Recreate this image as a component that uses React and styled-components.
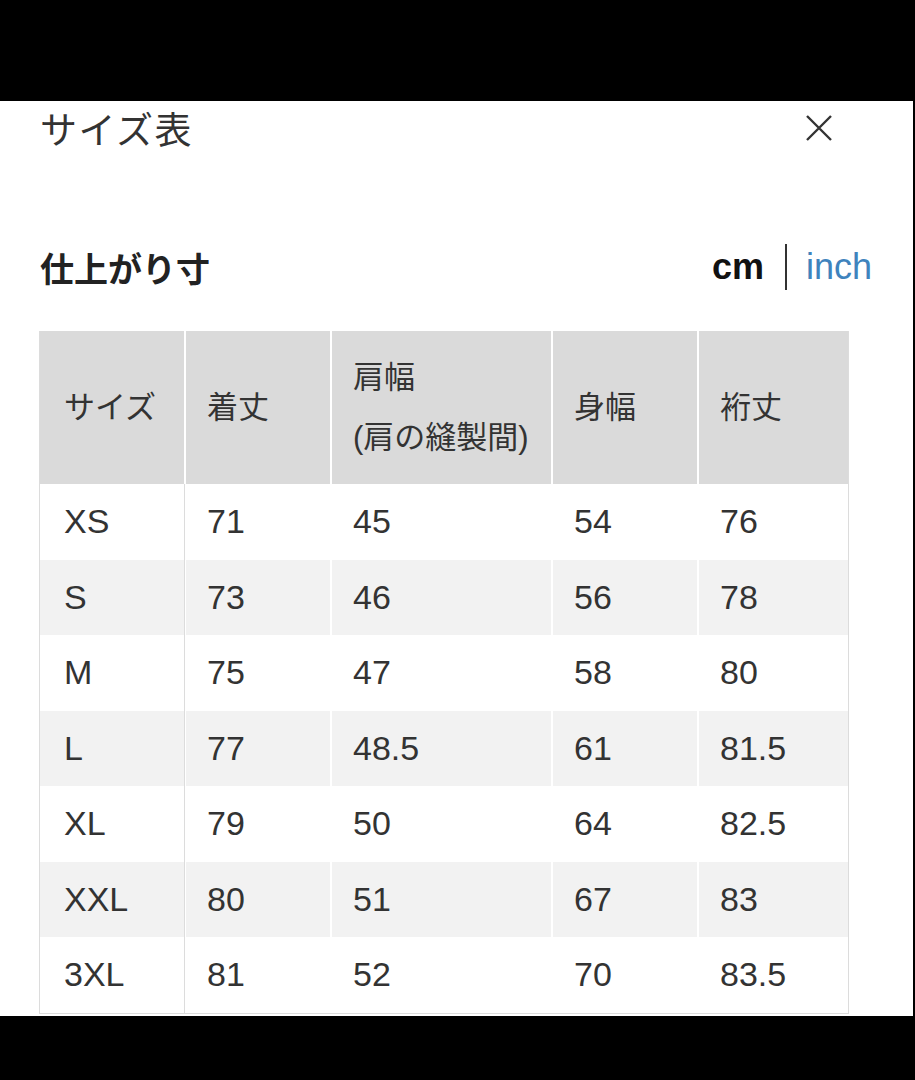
import React from 'react';
import styled, { createGlobalStyle } from 'styled-components';

// ページ全体（上下の黒帯）
const GlobalStyle = createGlobalStyle`
  html, body {
    margin: 0;
    padding: 0;
    background: #000;
  }
  body {
    font-family: "Liberation Sans", "Noto Sans CJK JP", sans-serif;
    color: #333;
  }
`;

const Screen = styled.div`
  width: 915px;
  height: 1080px;
  padding-top: 101px;
  box-sizing: border-box;
  background: #000;
`;

const Panel = styled.div`
  width: 913px;
  height: 915px;
  background: #fff;
  box-sizing: border-box;
  overflow: hidden;
`;

const TitleBar = styled.div`
  height: 54px;
  display: flex;
  align-items: center;
  justify-content: space-between;
  padding: 0 79px 0 40px;
`;

const Title = styled.h1`
  margin: 0;
  font-size: 37px;
  font-weight: 400;
  color: #333;
  letter-spacing: 1.5px;
`;

const CloseButton = styled.button`
  width: 30px;
  height: 30px;
  padding: 0;
  border: none;
  background: none;
  display: flex;
  align-items: center;
  justify-content: center;
`;

const SubBar = styled.div`
  margin-top: 83px;
  height: 58px;
  display: flex;
  align-items: center;
  justify-content: space-between;
  padding: 0 41px 0 40px;
`;

const SubTitle = styled.h2`
  margin: 0;
  font-size: 34px;
  font-weight: 700;
  color: #222;
`;

const Units = styled.div`
  display: flex;
  align-items: center;
`;

const Unit = styled.span`
  font-size: 36px;
  font-weight: ${p => (p.active ? 700 : 400)};
  color: ${p => (p.active ? '#111' : '#3f83bd')};
`;

const Divider = styled.span`
  width: 2px;
  height: 46px;
  background: #333;
  margin: 0 19px 0 21px;
`;

// 表
const Table = styled.div`
  margin: 35px 0 0 39px;
  width: 810px;
  border: 1px solid #dcdcdc;
  border-top: none;
  box-sizing: border-box;
`;

const Row = styled.div`
  display: grid;
  grid-template-columns: 144px 144px 219px 144px 149px;
  column-gap: 2px;
  height: ${p => (p.head ? '153px' : '75.5px')};
`;

const HeadCell = styled.div`
  background: #dadada;
  display: flex;
  flex-direction: column;
  justify-content: center;
  padding-left: ${p => (p.first ? '24px' : '21px')};
  font-size: 31px;
  line-height: 60px;
  color: #333;
`;

const Cell = styled.div`
  background: ${p => (p.striped ? '#f2f2f2' : '#fff')};
  display: flex;
  align-items: center;
  padding-left: ${p => (p.first ? '24px' : '21px')};
  font-size: 34px;
  color: #333;
  border-right: ${p => (p.first ? '1px solid #dcdcdc' : 'none')};
  margin-right: ${p => (p.first ? '-1px' : '0')};
`;

const heads = [['サイズ'], ['着丈'], ['肩幅', '(肩の縫製間)'], ['身幅'], ['裄丈']];

const rows = [
  ['XS', '71', '45', '54', '76'],
  ['S', '73', '46', '56', '78'],
  ['M', '75', '47', '58', '80'],
  ['L', '77', '48.5', '61', '81.5'],
  ['XL', '79', '50', '64', '82.5'],
  ['XXL', '80', '51', '67', '83'],
  ['3XL', '81', '52', '70', '83.5'],
];

function App() {
  return (
    <Screen>
      <GlobalStyle />
      <Panel>
        <TitleBar>
          <Title>サイズ表</Title>
          <CloseButton aria-label="閉じる">
            <svg width="28" height="28" viewBox="0 0 28 28">
              <path d="M2 2 L26 26 M26 2 L2 26" stroke="#333" strokeWidth="2.4" fill="none" />
            </svg>
          </CloseButton>
        </TitleBar>

        <SubBar>
          <SubTitle>仕上がり寸</SubTitle>
          <Units>
            <Unit active>cm</Unit>
            <Divider />
            <Unit>inch</Unit>
          </Units>
        </SubBar>

        <Table>
          <Row head>
            {heads.map((lines, i) => (
              <HeadCell key={i} first={i === 0}>
                {lines.map(l => (
                  <span key={l}>{l}</span>
                ))}
              </HeadCell>
            ))}
          </Row>
          {rows.map((r, ri) => (
            <Row key={r[0]}>
              {r.map((v, ci) => (
                <Cell key={ci} first={ci === 0} striped={ri % 2 === 1}>
                  {v}
                </Cell>
              ))}
            </Row>
          ))}
        </Table>
      </Panel>
    </Screen>
  );
}

export default App;
